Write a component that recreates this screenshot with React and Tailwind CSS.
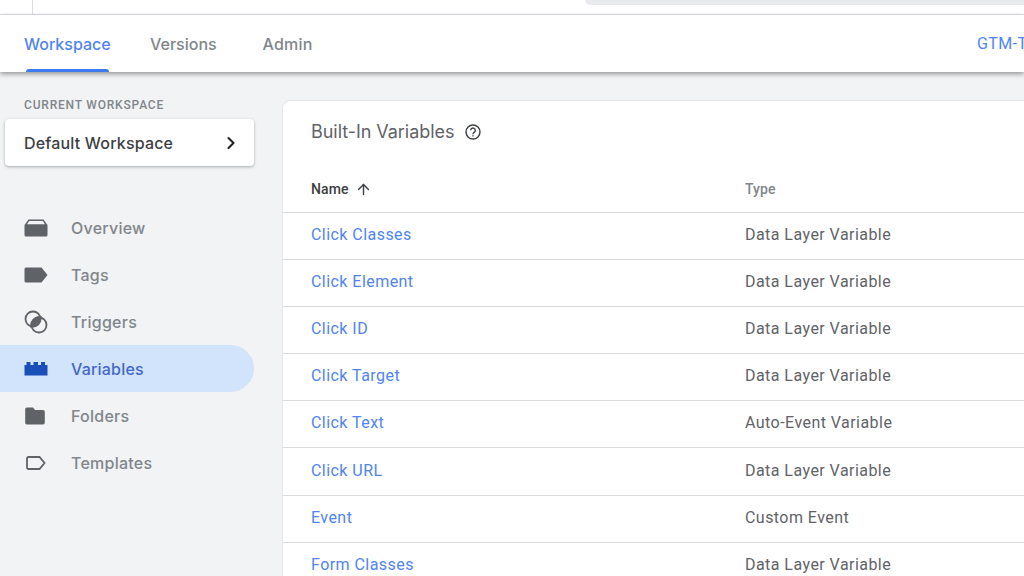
import { ChevronRight, ArrowUp } from 'lucide-react'

const rows = [
  ['Click Classes', 'Data Layer Variable'],
  ['Click Element', 'Data Layer Variable'],
  ['Click ID', 'Data Layer Variable'],
  ['Click Target', 'Data Layer Variable'],
  ['Click Text', 'Auto-Event Variable'],
  ['Click URL', 'Data Layer Variable', 'h-[48px]'],
  ['Event', 'Custom Event'],
  ['Form Classes', 'Data Layer Variable'],
]

function OverviewIcon({ className }) {
  return (
    <svg viewBox="0 0 24 18" className={className} fill="currentColor">
      <path d="M4.500 .5h15L23.500 6v10a1.500 1.500 0 0 1-1.500 1.500H2A1.500 1.500 0 0 1 .5 16V6z" />
      <path d="M5.200 2h13.600L21 5.200H3z" fill="#f1f3f4" />
    </svg>
  )
}

function TagIcon({ className }) {
  return (
    <svg viewBox="0 0 24 16" className={className} fill="currentColor">
      <path d="M2 .5h15.500L23.500 8l-6 7.500H2A1.500 1.500 0 0 1 .5 14V2A1.500 1.500 0 0 1 2 .5z" />
    </svg>
  )
}

function TriggerIcon({ className }) {
  return (
    <svg viewBox="0 0 24 24" className={className}>
      <path d="M15.800 7.800a8 8 0 0 1-8 8 8 8 0 0 1 8-8z" fill="currentColor" stroke="currentColor" strokeWidth="3.500" />
      <circle cx="9" cy="9" r="7.500" fill="none" stroke="currentColor" strokeWidth="1.800" />
      <circle cx="15" cy="15" r="7.500" fill="none" stroke="currentColor" strokeWidth="1.800" />
    </svg>
  )
}

function BlocksIcon({ className }) {
  return (
    <svg viewBox="0 0 24 15" className={className} fill="currentColor">
      <path d="M.5 14.500V4h2V1h4v3h3V1h4.500v3h3V1h4v3h2.500v10.500z" />
    </svg>
  )
}

function FolderIcon({ className }) {
  return (
    <svg viewBox="0 0 20 18" className={className} fill="currentColor">
      <path d="M2 .5h6l2 2.500h8A1.800 1.800 0 0 1 19.800 4.800v11A1.800 1.800 0 0 1 18 17.500H2A1.800 1.800 0 0 1 .2 15.700V2.300A1.800 1.800 0 0 1 2 .5z" />
    </svg>
  )
}

function TemplateIcon({ className }) {
  return (
    <svg viewBox="0 0 20 14" className={className} fill="none" stroke="currentColor" strokeWidth="1.800">
      <path d="M2.500 1h11L18.500 7l-5 6h-11A1.500 1.500 0 0 1 1 11.500v-9A1.500 1.500 0 0 1 2.500 1z" />
    </svg>
  )
}

function HelpIcon({ className }) {
  return (
    <svg viewBox="0 0 16 16" className={className} fill="none" stroke="currentColor" strokeWidth="1.400">
      <circle cx="8" cy="8" r="7" />
      <path d="M5.700 6.300a2.300 2.300 0 1 1 3.600 1.900c-.8.500-1.300 1-1.300 2" />
      <path d="M8 11.300v1.200" />
    </svg>
  )
}

const nav = [
  { label: 'Overview', icon: <OverviewIcon className="w-6 h-[18px]" /> },
  { label: 'Tags', icon: <TagIcon className="w-6 h-4" /> },
  { label: 'Triggers', icon: <TriggerIcon className="w-6 h-6" /> },
  { label: 'Variables', icon: <BlocksIcon className="w-6 h-[15px]" />, active: true },
  { label: 'Folders', icon: <FolderIcon className="w-5 h-[18px] ml-px" /> },
  { label: 'Templates', icon: <TemplateIcon className="w-5 h-3.5 ml-0.5" /> },
]

export default function App() {
  return (
    <div className="h-[576px] w-[1024px] overflow-hidden bg-[#f1f3f4] font-['Roboto',sans-serif] flex flex-col">
      <div className="h-[15px] shrink-0 bg-white border-b border-[#e0e2e8] flex relative z-10">
        <div className="ml-8 w-px h-full bg-[#dadce0]" />
        <div className="ml-[552px] flex-1 h-[5px] bg-[#e8eaed] rounded-bl-lg" />
      </div>

      <div className="h-[57px] shrink-0 bg-white relative z-10 shadow-[0_2px_5px_rgba(0,0,0,0.4)] flex items-center pl-6 text-base font-['Inter',sans-serif]">
        <div className="relative h-full flex items-center w-[126px]">
          <span className="text-[#4f84f2] font-medium">Workspace</span>
          <div className="absolute left-0.5 bottom-0 w-[83px] h-[3px] bg-[#3f7bf0] rounded-t" />
        </div>
        <span className="text-[#80868b] font-medium w-[112.500px]">Versions</span>
        <span className="text-[#80868b] font-medium tracking-[0.2px]">Admin</span>
        <span className="absolute left-[977px] font-['Roboto',sans-serif] tracking-[0.4px] text-[#4f84f2] whitespace-nowrap">GTM-T</span>
      </div>

      <div className="flex-1 flex min-h-0">
        <aside className="w-[282px] shrink-0">
          <div className="pl-6 pt-[27px] text-xs leading-[12px] font-medium tracking-[0.8px] text-[#80868b]">CURRENT WORKSPACE</div>
          <div className="ml-[5px] mt-2 w-[249px] h-[47px] bg-white rounded shadow-[0_1px_3px_rgba(60,64,67,0.4)] flex items-center justify-between pl-[19px] pr-[13px]">
            <span className="text-base font-medium tracking-[0.18px] text-[#3c4043] font-['Inter',sans-serif]">Default Workspace</span>
            <ChevronRight size={20} strokeWidth={2.500} className="text-[#202124]" />
          </div>
          <nav className="mt-[38px] w-[254px]">
            {nav.map((item) => (
              <div
                key={item.label}
                className={
                  item.active
                    ? 'h-[47px] flex items-center rounded-r-full bg-[#d2e3fc] text-[#1a4fb8]'
                    : 'h-[47px] flex items-center text-[#5f6368]'
                }
              >
                <div className="w-[71px] pl-6 flex items-center">{item.icon}</div>
                <span className={item.active ? "text-base font-medium tracking-[0.2px] font-['Inter',sans-serif] text-[#4268c9]" : "text-base font-medium tracking-[0.25px] font-['Inter',sans-serif] text-[#80868b]"}>
                  {item.label}
                </span>
              </div>
            ))}
          </nav>
        </aside>

        <main className="flex-1 mt-7 bg-white rounded-tl-lg border-l border-t border-[#e4e6ea] min-w-0">
          <div className="h-[65px] pl-7 pb-1 flex items-center gap-[11px]">
            <span className="text-lg tracking-[-0.05px] text-[#5f6368] font-['Inter',sans-serif]">Built-In Variables</span>
            <HelpIcon className="w-4 h-4 text-[#3c4043]" />
          </div>
          <div className="flex h-[47px] items-center border-b border-[#dadce0] text-sm tracking-[0.1px]">
            <div className="w-[434px] ml-7 flex items-center gap-1.5 font-medium text-[#3c4043]">
              Name <ArrowUp size={17} />
            </div>
            <div className="text-[#80868b] font-medium">Type</div>
          </div>
          {rows.map(([name, type, height]) => (
            <div key={name} className={`flex ${height || 'h-[47px]'} items-center border-b border-[#dadce0] text-base tracking-[0.45px] pb-0.5`}>
              <div className="w-[434px] ml-7 text-[#4f84f2]">{name}</div>
              <div className="text-[#5f6368]">{type}</div>
            </div>
          ))}
        </main>
      </div>
    </div>
  )
}
